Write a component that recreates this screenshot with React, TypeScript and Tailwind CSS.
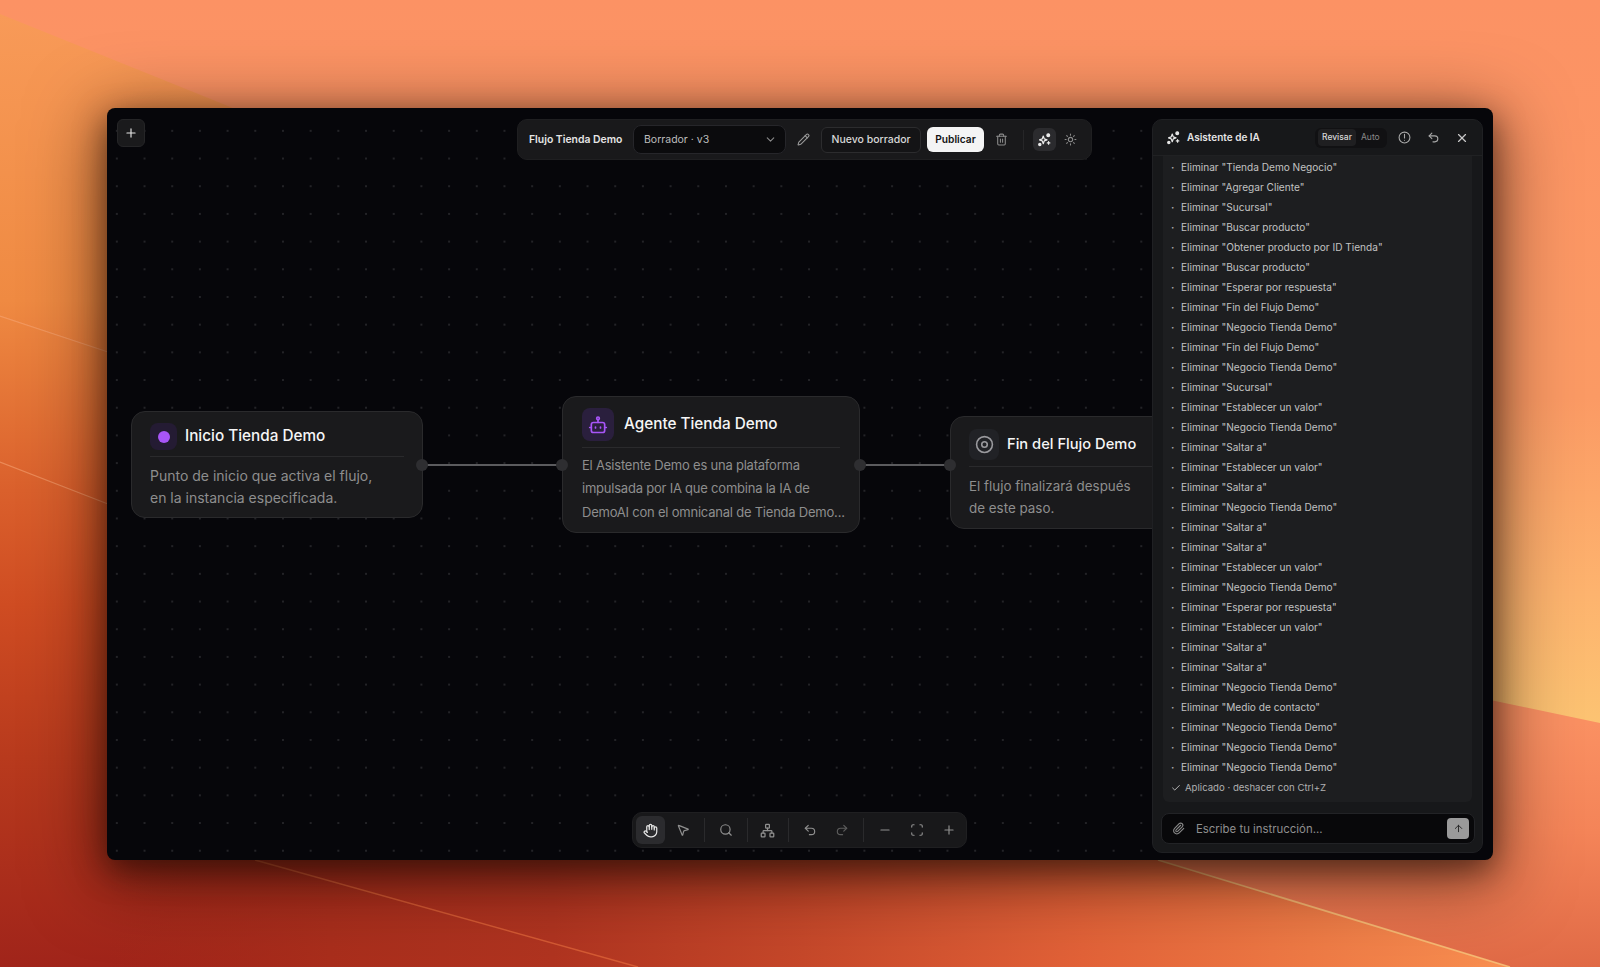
import { ChevronDown, Pencil, Trash2, Sun, Hand, MousePointer2, Search, Network, Undo2, Redo2, Minus, Scan, Plus, Paperclip, ArrowUp, X, Check } from "lucide-react";
import type { ReactNode } from "react";

const items = [
  "Tienda Demo Negocio","Agregar Cliente","Sucursal","Buscar producto","Obtener producto por ID Tienda","Buscar producto","Esperar por respuesta","Fin del Flujo Demo","Negocio Tienda Demo","Fin del Flujo Demo","Negocio Tienda Demo","Sucursal","Establecer un valor","Negocio Tienda Demo","Saltar a","Establecer un valor","Saltar a","Negocio Tienda Demo","Saltar a","Saltar a","Establecer un valor","Negocio Tienda Demo","Esperar por respuesta","Establecer un valor","Saltar a","Saltar a","Negocio Tienda Demo","Medio de contacto","Negocio Tienda Demo","Negocio Tienda Demo","Negocio Tienda Demo",
];

function Sparkle({ size = 16 }: { size?: number }) {
  return (
    <svg width={size} height={size} viewBox="0 0 24 24" fill="none" stroke="currentColor" strokeWidth="2" strokeLinejoin="round" strokeLinecap="round">
      <path d="M10 6.5 11.6 11l4.4 1.6-4.4 1.6L10 18.7l-1.6-4.5L4 12.6 8.4 11Z" />
      <circle cx="18" cy="5" r="2.2" fill="currentColor" />
      <circle cx="4.5" cy="20" r="1.8" fill="currentColor" />
      <path d="M16.5 17.5h4M18.5 15.5v4" />
    </svg>
  );
}

function Wallpaper() {
  return (
    <svg className="absolute inset-0 h-full w-full" viewBox="0 0 1600 967" preserveAspectRatio="none">
      <defs>
        <linearGradient id="top" gradientUnits="userSpaceOnUse" x1="0" y1="0" x2="0" y2="723">
          <stop offset="0" stopColor="#fc9264" />
          <stop offset="0.55" stopColor="#fb9a64" />
          <stop offset="0.82" stopColor="#fdb36e" />
          <stop offset="1" stopColor="#fcc372" />
        </linearGradient>
        <linearGradient id="left" gradientUnits="userSpaceOnUse" x1="0" y1="14" x2="0" y2="967">
          <stop offset="0" stopColor="#f89a58" />
          <stop offset="0.3" stopColor="#ef8a42" />
          <stop offset="0.5" stopColor="#da602c" />
          <stop offset="0.62" stopColor="#cf4c22" />
          <stop offset="0.78" stopColor="#b83a1d" />
          <stop offset="1" stopColor="#a0241a" />
        </linearGradient>
        <linearGradient id="bottom" gradientUnits="userSpaceOnUse" x1="107" y1="0" x2="1500" y2="0">
          <stop offset="0" stopColor="#a52a1a" stopOpacity="0" />
          <stop offset="0.16" stopColor="#a92e1c" />
          <stop offset="0.32" stopColor="#b03420" />
          <stop offset="0.5" stopColor="#c6482a" />
          <stop offset="0.7" stopColor="#e26238" />
          <stop offset="1" stopColor="#f88e50" />
        </linearGradient>
        <linearGradient id="br" gradientUnits="userSpaceOnUse" x1="0" y1="723" x2="0" y2="967">
          <stop offset="0" stopColor="#fa9062" />
          <stop offset="0.45" stopColor="#f48458" />
          <stop offset="1" stopColor="#e06a46" />
        </linearGradient>
      </defs>
      <rect width="1600" height="967" fill="url(#top)" />
      <polygon points="0,14 233,108 400,108 400,967 0,967" fill="url(#left)" />
      <polygon points="1400,681 1600,723 1600,967 1510,967 1158,860 1158,681" fill="url(#br)" />
      <polygon points="107,860 1158,860 1510,967 107,967" fill="url(#bottom)" />
      <path d="M0 316 L108 352 M0 462 L108 504" stroke="#f8a878" strokeWidth="1.2" opacity="0.55" fill="none" />
      <path d="M255 860 L638 967" stroke="#e26a3c" strokeWidth="1.5" opacity="0.7" fill="none" />
      <path d="M1158 860 L1510 967" stroke="#f7c078" strokeWidth="1.8" opacity="0.85" fill="none" />
    </svg>
  );
}

function Node({ className, iconBox, icon, title, lines, titleClass, pad, body }: { className: string; iconBox: string; icon: ReactNode; title: string; lines: string[]; titleClass: string; pad: string; body: string }) {
  return (
    <div className={`absolute rounded-[14px] border border-[#2a2a2c] bg-[#1a1a1c] ${pad} ${className}`}>
      <div className="flex items-center border-b border-[#2a2a2c] pb-[6px]">
        <div className={`flex items-center justify-center rounded-lg ${iconBox}`}>{icon}</div>
        <span className={`whitespace-nowrap font-medium text-[#f5f5f5] ${titleClass}`}>{title}</span>
      </div>
      <div className={`text-[#8e8e8e] ${body}`}>
        {lines.map((l) => (
          <div key={l} className="whitespace-nowrap">{l}</div>
        ))}
      </div>
    </div>
  );
}

function Divider() {
  return <div className="h-6 w-px bg-[#2a2a2c]" />;
}

export default function App() {
  return (
    <div className="relative h-[967px] w-[1600px] overflow-hidden" style={{ fontFamily: "Inter, sans-serif" }}>
      <Wallpaper />
      <div className="relative pl-[107px] pt-[108px]">
        <div className="relative h-[752px] w-[1386px] overflow-hidden rounded-lg bg-[#06060a]" style={{ boxShadow: "0 10px 30px rgba(20,5,0,0.5), 0 14px 70px 8px rgba(20,5,0,0.5)" }}>
          {/* dotted canvas */}
          <div className="absolute inset-0 bg-[radial-gradient(circle,#232327_1px,transparent_1.2px)] bg-[size:27.7px_27.7px] bg-[position:-4px_9px]" />

          {/* add */}
          <button className="absolute left-[10px] top-[11px] flex h-[28px] w-[28px] items-center justify-center rounded-md border border-[#252527] bg-[#1a1a1c] text-[#e5e5e5]">
            <Plus size={14} />
          </button>

          {/* edges */}
          <div className="absolute left-[315px] top-[356px] h-[2px] w-[140px] bg-[#5b5b5e]" />
          <div className="absolute left-[753px] top-[356px] h-[2px] w-[90px] bg-[#5b5b5e]" />

          {/* nodes */}
          <Node
            className="left-[24px] top-[303px] h-[107px] w-[292px]"
            pad="px-[18px] pt-[11px]"
            iconBox="mr-2 h-[27px] w-[27px] bg-[#241b33]"
            icon={<span className="h-[12px] w-[12px] rounded-full bg-[#a855f7]" />}
            title="Inicio Tienda Demo"
            titleClass="text-[15.3px]"
            body="pt-[8px] text-[14px] leading-[22px]"
            lines={["Punto de inicio que activa el flujo,", "en la instancia especificada."]}
          />
          <Node
            className="left-[455px] top-[288px] h-[137px] w-[298px]"
            pad="px-[19px] pt-[11px]"
            iconBox="mr-[10px] h-[33px] w-[32px] bg-[#2a1f3d]"
            icon={
              <svg width="20" height="20" viewBox="0 0 24 24" fill="none" stroke="#a855f7" strokeWidth="2" strokeLinecap="round" strokeLinejoin="round">
                <circle cx="12" cy="4" r="1.6" />
                <path d="M12 5.6V9" />
                <rect x="4" y="9" width="16" height="12" rx="2.5" />
                <path d="M2 15h2M20 15h2M9 14.5v1M15 14.5v1" />
              </svg>
            }
            title="Agente Tienda Demo"
            titleClass="text-[15.3px]"
            body="pt-[6px] text-[13px] leading-[23.3px] tracking-[-0.22px]"
            lines={["El Asistente Demo es una plataforma", "impulsada por IA que combina la IA de", "DemoAI con el omnicanal de Tienda Demo..."]}
          />
          <Node
            className="left-[843px] top-[308px] h-[113px] w-[300px]"
            pad="px-[18px] pt-[12px]"
            iconBox="mr-[8px] h-[31px] w-[30px] bg-[#212226]"
            icon={
              <svg width="19" height="19" viewBox="0 0 24 24" fill="none" stroke="#9a9a9e" strokeWidth="2">
                <circle cx="12" cy="12" r="10" />
                <circle cx="12" cy="12" r="3.5" />
              </svg>
            }
            title="Fin del Flujo Demo"
            titleClass="text-[14.7px]"
            body="pt-[8px] text-[13.4px] leading-[22.4px]"
            lines={["El flujo finalizará después", "de este paso."]}
          />

          {/* handles */}
          <div className="absolute left-[309px] top-[351px] h-3 w-3 rounded-full bg-[#2e2e31]" />
          <div className="absolute left-[449px] top-[351px] h-3 w-3 rounded-full bg-[#2e2e31]" />
          <div className="absolute left-[747px] top-[351px] h-3 w-3 rounded-full bg-[#2e2e31]" />
          <div className="absolute left-[837px] top-[351px] h-3 w-3 rounded-full bg-[#2e2e31]" />

          {/* top toolbar */}
          <div className="absolute left-[410px] top-[11px] flex h-[41px] w-[575px] items-center rounded-[10px] border border-[#1f1f21] bg-[#19191b] pl-[11px] text-[#e5e5e5]">
            <span className="w-[93px] whitespace-nowrap text-[10.4px] font-semibold">Flujo Tienda Demo</span>
            <div className="ml-[11px] flex h-[29px] w-[153px] items-center justify-between rounded-lg border border-[#26262a] bg-[#0b0b0d] pl-[10px] pr-[8px] text-[10.5px] text-[#bdbdbd]">
              <span>Borrador · v3</span>
              <ChevronDown size={13} className="text-[#8a8a8a]" />
            </div>
            <Pencil size={13} className="ml-[11px] text-[#9a9a9a]" />
            <button className="ml-[11px] flex h-[26px] w-[100px] items-center justify-center rounded-md border border-[#2c2c2e] bg-[#141416] text-[10.5px] font-medium text-[#d8d8d8]">Nuevo borrador</button>
            <button className="ml-[6px] flex h-[25px] w-[57px] items-center justify-center rounded-md bg-[#f4f4f4] text-[10.2px] font-semibold text-[#111]">Publicar</button>
            <Trash2 size={13} className="ml-[11px] text-[#8a8a8a]" />
            <div className="ml-[15px] h-5 w-px bg-[#262628]" />
            <div className="ml-[9px] flex h-[23px] w-[23px] items-center justify-center rounded-md bg-[#2b2b2e] text-[#eaeaea]"><Sparkle size={15} /></div>
            <Sun size={13} className="ml-[8px] text-[#8a8a8a]" />
          </div>

          {/* bottom toolbar */}
          <div className="absolute left-[525px] top-[704px] flex h-[36px] w-[335px] items-center rounded-[10px] border border-[#1f1f21] bg-[#18181a] pl-[3px] text-[#8f8f8f]">
            <div className="flex h-7 w-[29px] items-center justify-center rounded-md bg-[#2b2b2e] text-[#e5e5e5]"><Hand size={15} /></div>
            <MousePointer2 size={14} className="ml-[11px]" />
            <div className="ml-[14px]"><Divider /></div>
            <Search size={14} className="ml-[14px]" />
            <div className="ml-[14px]"><Divider /></div>
            <Network size={15} className="ml-[12px]" />
            <div className="ml-[13px]"><Divider /></div>
            <Undo2 size={14} className="ml-[14px]" />
            <Redo2 size={14} className="ml-[18px] text-[#5c5c5c]" />
            <div className="ml-[14px]"><Divider /></div>
            <Minus size={14} className="ml-[14px]" />
            <Scan size={14} className="ml-[18px]" />
            <Plus size={14} className="ml-[18px]" />
          </div>

          {/* assistant */}
          <div className="absolute left-[1045px] top-[11px] flex h-[734px] w-[331px] flex-col rounded-[10px] border border-[#1f2023] bg-[#17181a]">
            <div className="flex h-[36px] shrink-0 items-center border-b border-[#202123] pl-[13px] text-[#e5e5e5]">
              <Sparkle size={15} />
              <span className="ml-[6px] w-[128px] text-[10px] font-semibold">Asistente de IA</span>
              <div className="flex h-[20px] w-[72px] items-center rounded-md bg-[#111113] pl-[3px] text-[8.5px]">
                <span className="flex h-[17px] w-[38px] items-center justify-center rounded bg-[#1f1f21] font-medium text-[#d8d8d8]">Revisar</span>
                <span className="ml-[5px] text-[#8a8a8a]">Auto</span>
              </div>
              <svg width="13" height="13" viewBox="0 0 24 24" fill="none" stroke="#a8a8a8" strokeWidth="2" strokeLinecap="round" className="ml-[11px]"><circle cx="12" cy="12" r="10" /><path d="M12 6v7M12 17h.01" /></svg>
              <Undo2 size={13} className="ml-[16px] text-[#a8a8a8]" />
              <X size={14} className="ml-[15px] text-[#c8c8c8]" />
            </div>
            <div className="mx-[10px] h-[646px] shrink-0 overflow-hidden rounded-b-md bg-[#1d1e20] pl-[8px] pt-[1.6px] text-[10.1px] text-[#c2c2c2]">
              {items.map((t, i) => (
                <div key={i} className="flex h-[20.01px] items-center whitespace-nowrap">
                  <span className="w-[10px] font-bold text-[#a8a8a8]">·</span>
                  <span>Eliminar "{t}"</span>
                </div>
              ))}
              <div className="flex h-[21px] items-center whitespace-nowrap text-[9.6px] text-[#b0b0b0]">
                <Check size={10} className="mr-[4px] text-[#d5d5d5]" />
                <span>Aplicado · deshacer con Ctrl+Z</span>
              </div>
            </div>
            <div className="ml-[8px] mr-[7px] mt-[11px] flex h-[31px] items-center rounded-lg border border-[#222326] bg-[#08080a] pl-[10px] pr-[5px]">
              <Paperclip size={13} className="text-[#8a8a8a]" />
              <span className="ml-[11px] flex-1 pt-[2px] text-[11.4px] text-[#8f8f8f]">Escribe tu instrucción...</span>
              <div className="flex h-[21px] w-[22px] items-center justify-center rounded bg-[#9a9a9a] text-[#222]"><ArrowUp size={11} /></div>
            </div>
          </div>
        </div>
      </div>
    </div>
  );
}
